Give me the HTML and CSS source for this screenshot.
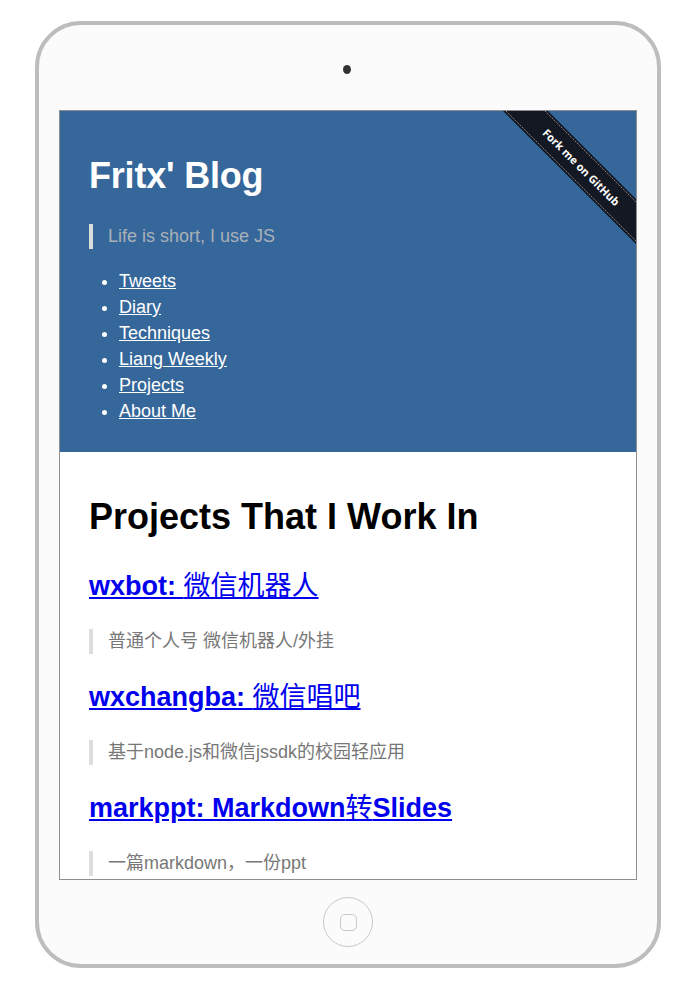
FILE: index.html
```html
<!DOCTYPE html>
<html lang="zh-CN">
<head>
<meta charset="utf-8">
<title>Fritx' Blog</title>
<link rel="stylesheet" href="styles.css">
</head>
<body>
<div class="device">
  <div class="camera"></div>
  <div class="screen">
    <header class="site-header">
      <h1 class="site-title">Fritx' Blog</h1>
      <blockquote class="tagline">Life is short, I use JS</blockquote>
      <ul class="nav">
        <li><a href="#">Tweets</a></li>
        <li><a href="#">Diary</a></li>
        <li><a href="#">Techniques</a></li>
        <li><a href="#">Liang Weekly</a></li>
        <li><a href="#">Projects</a></li>
        <li><a href="#">About Me</a></li>
      </ul>
      <svg class="ribbon" width="149" height="149" viewBox="0 0 149 149">
        <polygon points="16,0 61,0 149,88 149,133" fill="#141823"/>
        <line x1="58" y1="0" x2="149" y2="91" stroke="#8a8d94" stroke-width="1" stroke-dasharray="1.5 1"/>
        <line x1="19" y1="0" x2="149" y2="130" stroke="#8a8d94" stroke-width="1" stroke-dasharray="1.5 1"/>
        <text class="ribbon-text" transform="translate(94.5 56) rotate(45)" text-anchor="middle" dominant-baseline="central">Fork me on GitHub</text>
      </svg>
    </header>
    <main class="content">
      <h1 class="page-title">Projects That I Work In</h1>
      <h2 class="project"><a href="#">wxbot: <span class="cjk">微信机器人</span></a></h2>
      <blockquote class="desc">普通个人号 微信机器人/外挂</blockquote>
      <h2 class="project"><a href="#">wxchangba: <span class="cjk">微信唱吧</span></a></h2>
      <blockquote class="desc">基于node.js和微信jssdk的校园轻应用</blockquote>
      <h2 class="project"><a href="#">markppt: Markdown<span class="cjk">转</span>Slides</a></h2>
      <blockquote class="desc">一篇markdown，一份ppt</blockquote>
    </main>
  </div>
  <div class="home"><div class="home-square"></div></div>
</div>
</body>
</html>
```
FILE: styles.css
```css
html, body {
  margin: 0;
  padding: 0;
  background: #ffffff;
}

body {
  font-family: "Liberation Sans", Arial, "Noto Sans CJK SC", sans-serif;
}

.device {
  box-sizing: border-box;
  width: 626px;
  height: 947px;
  margin: 21px 0 0 35px;
  border: 4px solid #bdbdbd;
  border-radius: 46px;
  background: #fbfbfb;
  display: flex;
  flex-direction: column;
  align-items: center;
}

.camera {
  width: 8px;
  height: 9px;
  margin-top: 40px;
  margin-left: -2px;
  border-radius: 50%;
  background: #333333;
}

.screen {
  box-sizing: border-box;
  width: 578px;
  height: 770px;
  margin-top: 36px;
  border: 1px solid #8e8e8e;
  background: #ffffff;
  overflow: hidden;
  position: relative;
}

.site-header {
  background: #35679a;
  padding: 45px 29px 28px;
  color: #ffffff;
}

.site-title {
  margin: 0;
  font-size: 36px;
  line-height: 40px;
  font-weight: bold;
  letter-spacing: -0.2px;
  color: #ffffff;
}

.tagline {
  margin: 28px 0 0;
  padding: 0 0 0 15px;
  border-left: 4px solid #dddddd;
  font-size: 18px;
  line-height: 25px;
  color: #aab0b8;
}

.nav {
  margin: 19px 0 0;
  padding: 0 0 0 30px;
  font-size: 18px;
  line-height: 26px;
}

.nav a {
  color: #ffffff;
  text-decoration: underline;
}

.ribbon {
  position: absolute;
  top: 0;
  right: 0;
}

.ribbon-text {
  font-family: "Open Sans", "DejaVu Sans", sans-serif;
  font-size: 11px;
  font-weight: 700;
  fill: #ffffff;
}

.content {
  padding: 0 29px;
}

.page-title {
  margin: 45px 0 0;
  font-size: 36px;
  line-height: 40px;
  font-weight: bold;
  color: #000000;
}

.project {
  margin: 27px 0 0;
  font-size: 27px;
  line-height: 32px;
  font-weight: bold;
}

.page-title + .project {
  margin-top: 33px;
}

.project a {
  color: #0000ee;
  text-decoration: underline;
}

.cjk {
  font-weight: normal;
}

.desc {
  margin: 27px 0 0;
  padding: 0 0 0 15px;
  border-left: 4px solid #dddddd;
  font-size: 18px;
  line-height: 25px;
  color: #777777;
}

.home {
  box-sizing: border-box;
  width: 50px;
  height: 50px;
  margin-top: 17px;
  border: 1px solid #c8c8c8;
  border-radius: 50%;
  display: flex;
  align-items: center;
  justify-content: center;
}

.home-square {
  box-sizing: border-box;
  width: 17px;
  height: 17px;
  border: 1px solid #c8c8c8;
  border-radius: 5px;
}
```
